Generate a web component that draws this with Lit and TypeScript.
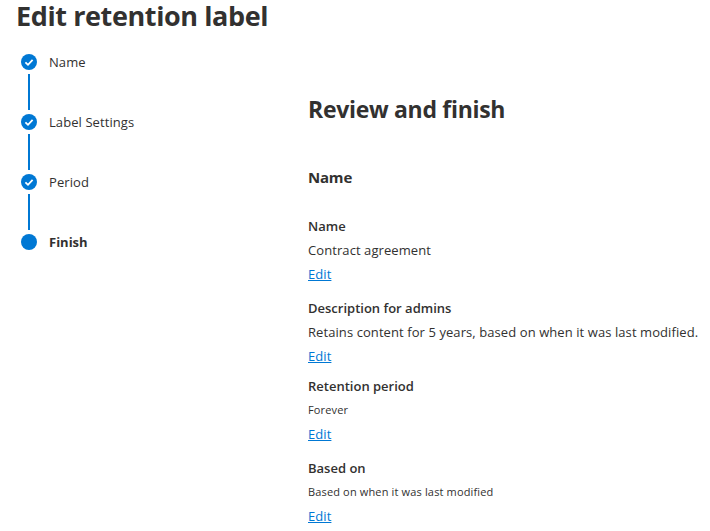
import { LitElement, html, svg, css } from "lit";
import { customElement } from "lit/decorators.js";

const steps = [
  { label: "Name", done: true },
  { label: "Label Settings", done: true },
  { label: "Period", done: true },
  { label: "Finish", done: false },
];

const fields = [
  { cls: "", label: "Name", value: "Contract agreement", small: false },
  { cls: "g10", label: "Description for admins", value: "Retains content for 5 years, based on when it was last modified.", small: false },
  { cls: "g6", label: "Retention period", value: "Forever", small: true },
  { cls: "g10", label: "Based on", value: "Based on when it was last modified", small: true },
];

@customElement("app-root")
export class AppRoot extends LitElement {
  static styles = css`
    :host {
      display: block;
      width: 710px;
      height: 531px;
      overflow: hidden;
      background: #fff;
      color: #323130;
      font-family: "Open Sans", "Noto Sans", sans-serif;
      font-size: 13px;
    }
    h1 {
      margin: 0;
      padding-left: 16px;
      height: 32px;
      line-height: 32px;
      font-size: 27px;
      font-weight: 700;
      letter-spacing: -0.4px;
      white-space: nowrap;
    }
    .body {
      display: flex;
      padding-top: 20px;
    }
    .steps {
      width: 308px;
      flex: none;
      padding-left: 21px;
      box-sizing: border-box;
    }
    .step {
      display: flex;
      gap: 12px;
      height: 60px;
    }
    .rail {
      width: 16px;
      display: flex;
      flex-direction: column;
      align-items: center;
    }
    .dot {
      width: 16px;
      height: 16px;
      flex: none;
      display: block;
      margin-top: 2px;
    }
    .line {
      width: 2px;
      height: 36px;
      margin-top: 4px;
      background: #0078d4;
    }
    .label {
      line-height: 20px;
      letter-spacing: 0.08px;
    }
    .label.on {
      font-weight: 700;
      letter-spacing: 0;
    }
    .main h2 {
      margin: 0;
      padding-top: 40px;
      height: 34px;
      line-height: 34px;
      font-size: 23px;
      font-weight: 700;
      letter-spacing: -0.3px;
      white-space: nowrap;
    }
    .main h3 {
      margin: 0;
      margin-top: 39px;
      height: 24px;
      line-height: 24px;
      font-size: 15px;
      font-weight: 700;
      letter-spacing: -0.2px;
    }
    .fields {
      padding-top: 25px;
    }
    .field.g10 {
      margin-top: 10px;
    }
    .field.g6 {
      margin-top: 6px;
    }
    .row {
      height: 24px;
      line-height: 24px;
      white-space: nowrap;
      letter-spacing: 0.08px;
    }
    .name {
      font-weight: 600;
      letter-spacing: 0;
    }
    .row.small {
      font-size: 11px;
      letter-spacing: 0.15px;
    }
    a {
      color: #0078d4;
      text-decoration: underline;
    }
  `;

  private dot(done: boolean) {
    return html`<svg class="dot" viewBox="0 0 16 16" aria-hidden="true">
      <circle cx="8" cy="8" r="8" fill="#0078d4"></circle>
      ${done
        ? svg`<path d="M4.4 8.3 L7 10.8 L11.6 5.9" fill="none" stroke="#fff" stroke-width="1.8"></path>`
        : ""}
    </svg>`;
  }

  render() {
    return html`
      <h1>Edit retention label</h1>
      <div class="body">
        <div class="steps">
          ${steps.map(
            (s, i) => html`<div class="step">
              <div class="rail">
                ${this.dot(s.done)}
                ${i < steps.length - 1 ? html`<div class="line"></div>` : ""}
              </div>
              <div class="label ${s.done ? "" : "on"}">${s.label}</div>
            </div>`
          )}
        </div>
        <div class="main">
          <h2>Review and finish</h2>
          <h3>Name</h3>
          <div class="fields">
            ${fields.map(
              (f) => html`<div class="field ${f.cls}">
                <div class="row name">${f.label}</div>
                <div class="row ${f.small ? "small" : ""}">${f.value}</div>
                <div class="row"><a href="#">Edit</a></div>
              </div>`
            )}
          </div>
        </div>
      </div>
    `;
  }
}
